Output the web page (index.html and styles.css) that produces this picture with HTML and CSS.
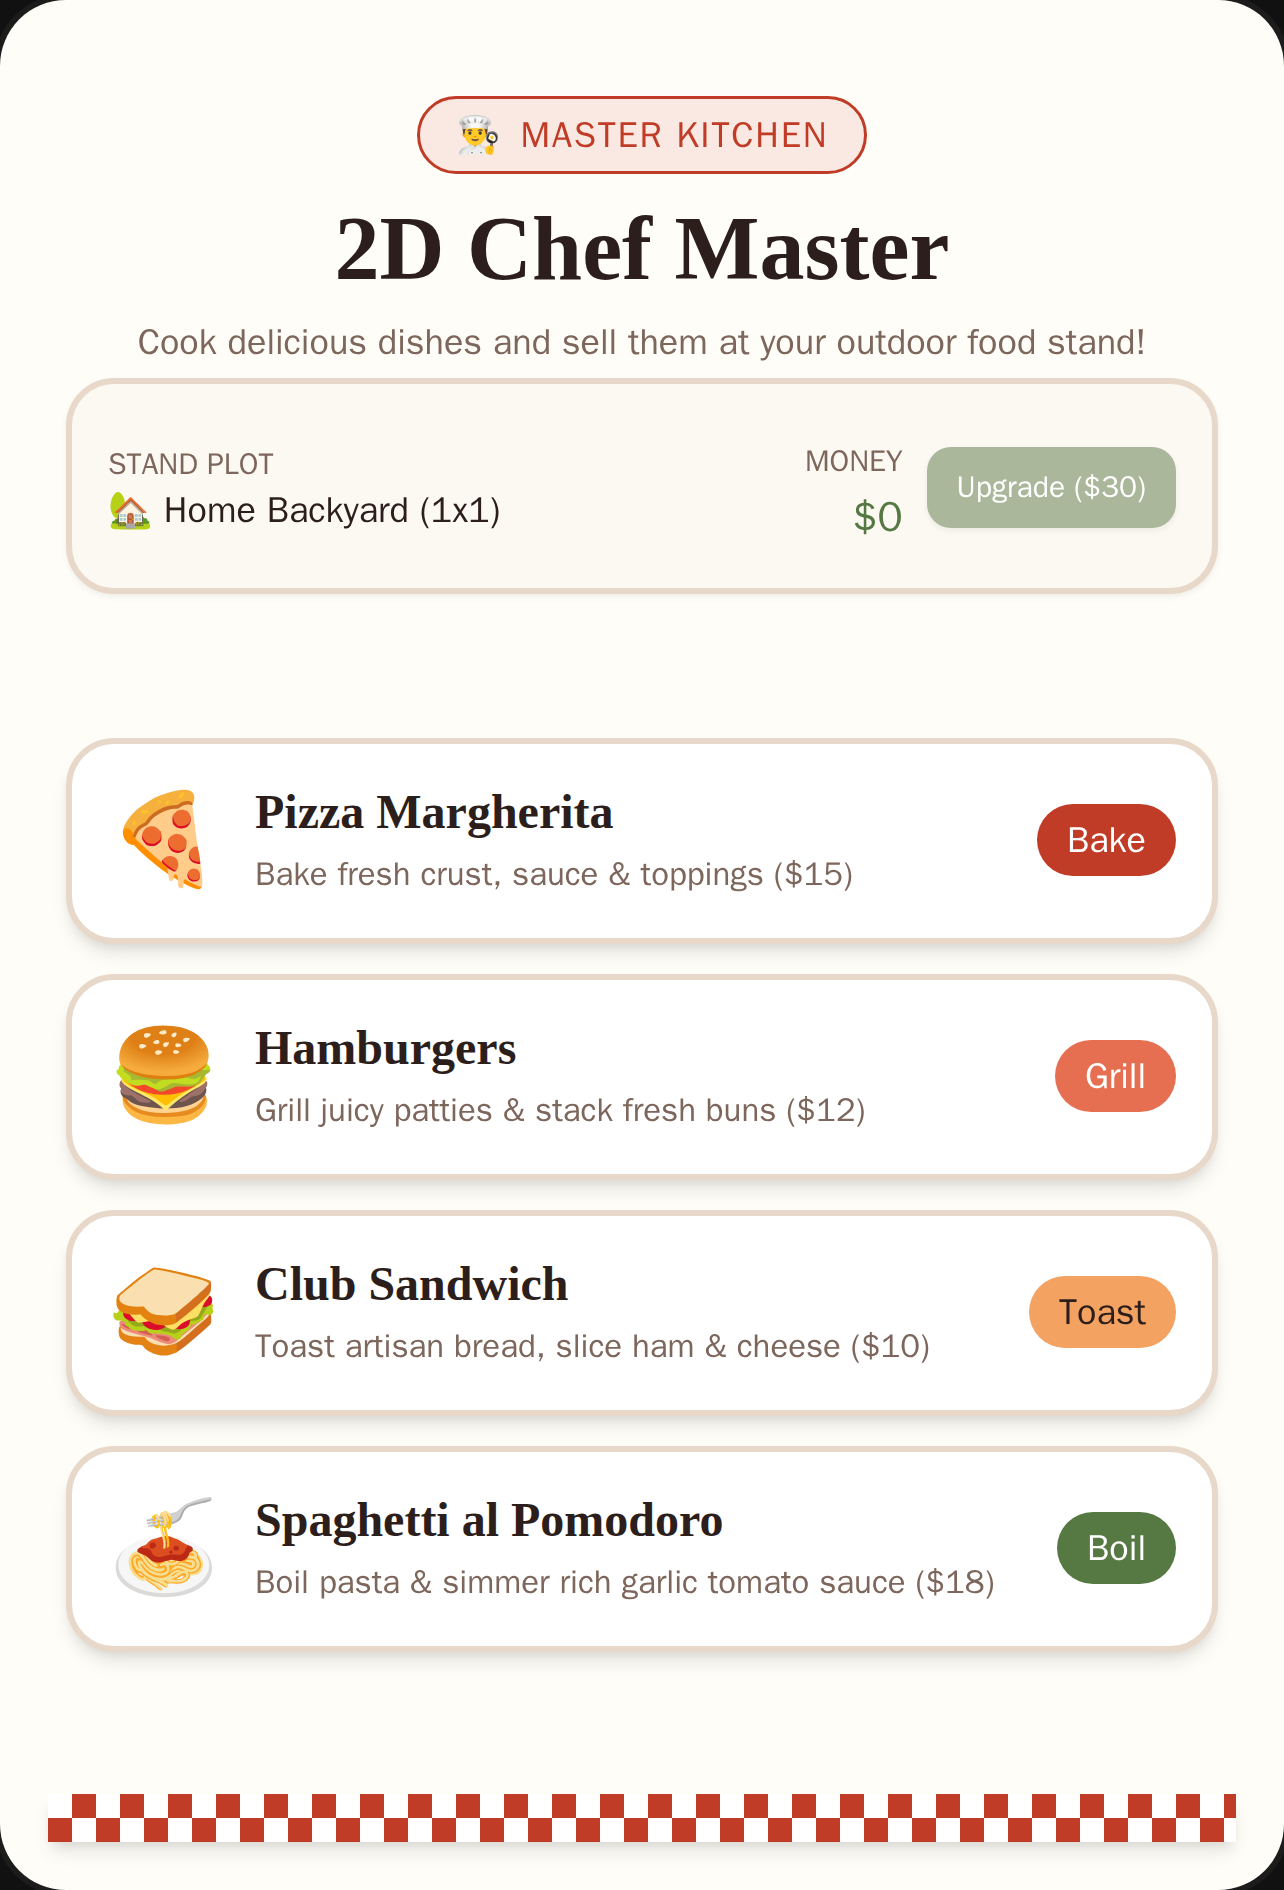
FILE: index.html
```html
<!DOCTYPE html>
<html lang="en">
<head>
<meta charset="utf-8">
<meta name="viewport" content="width=device-width, initial-scale=1">
<title>2D Chef Master</title>
<link rel="stylesheet" href="styles.css">
</head>
<body>
<div class="screen">
  <header class="intro">
    <div class="badge"><span>👨‍🍳</span><span>MASTER KITCHEN</span></div>
    <h1 class="title">2D Chef Master</h1>
    <p class="subtitle">Cook delicious dishes and sell them at your outdoor food stand!</p>
  </header>
  <main class="content">
    <section class="stand">
      <div class="plot">
        <span class="label">STAND PLOT</span>
        <span class="plot-name">🏡 Home Backyard (1x1)</span>
      </div>
      <div class="money">
        <span class="label">MONEY</span>
        <span class="amount">$0</span>
      </div>
      <button class="upgrade" type="button" disabled>Upgrade ($30)</button>
    </section>
    <section class="dishes">
      <article class="dish">
        <span class="dish-icon">🍕</span>
        <div class="dish-text">
          <h2 class="dish-name">Pizza Margherita</h2>
          <p class="dish-info">Bake fresh crust, sauce &amp; toppings ($15)</p>
        </div>
        <button class="action bake" type="button">Bake</button>
      </article>
      <article class="dish">
        <span class="dish-icon">🍔</span>
        <div class="dish-text">
          <h2 class="dish-name">Hamburgers</h2>
          <p class="dish-info">Grill juicy patties &amp; stack fresh buns ($12)</p>
        </div>
        <button class="action grill" type="button">Grill</button>
      </article>
      <article class="dish">
        <span class="dish-icon">🥪</span>
        <div class="dish-text">
          <h2 class="dish-name">Club Sandwich</h2>
          <p class="dish-info">Toast artisan bread, slice ham &amp; cheese ($10)</p>
        </div>
        <button class="action toast" type="button">Toast</button>
      </article>
      <article class="dish">
        <span class="dish-icon">🍝</span>
        <div class="dish-text">
          <h2 class="dish-name">Spaghetti al Pomodoro</h2>
          <p class="dish-info">Boil pasta &amp; simmer rich garlic tomato sauce ($18)</p>
        </div>
        <button class="action boil" type="button">Boil</button>
      </article>
    </section>
  </main>
  <div class="checker"></div>
</div>
</body>
</html>
```
FILE: styles.css
```css
:root {
  --cream: #fffdf7;
  --ink: #2c1e1b;
  --brown: #7d665b;
  --tan: #e8d8c9;
  --red: #c03c27;
  --green: #567842;
  --sans: "WenQuanYi Zen Hei", "Libre Franklin", "Liberation Sans", sans-serif;
  --serif: "Liberation Serif", serif;
}

* { box-sizing: border-box; }

html { background: #111; }

body {
  margin: 0;
  color: var(--ink);
  font-family: var(--sans);
}

h1, h2, p { margin: 0; }

button {
  border: 0;
  font-family: inherit;
  cursor: pointer;
}

.screen {
  display: flex;
  flex-direction: column;
  min-height: 100vh;
  padding: 96px 48px 48px;
  border-radius: 66px;
  background: var(--cream);
  box-shadow: 0 0 0 6px #1c1c1c;
}

.intro {
  display: flex;
  flex-direction: column;
  align-items: center;
  text-align: center;
}

.badge {
  display: flex;
  align-items: center;
  gap: 18px;
  height: 78px;
  padding: 0 36px;
  border: 3px solid var(--red);
  border-radius: 39px;
  background: #fae9e2;
  color: var(--red);
  font-size: 36px;
  letter-spacing: 0.05em;
}

.title {
  margin-top: 21px;
  font: bold 90px/108px var(--serif);
}

.subtitle {
  margin: 15px 0 12px;
  color: var(--brown);
  font-size: 36px;
  line-height: 48px;
}

.content {
  display: flex;
  flex-direction: column;
  gap: 144px;
  padding: 0 18px;
}

.stand {
  display: flex;
  align-items: center;
  gap: 24px;
  min-height: 216px;
  padding: 37px 36px 35px;
  border: 6px solid var(--tan);
  border-radius: 48px;
  background: #fcf9f3;
  box-shadow: 0 3px 6px rgba(0, 0, 0, 0.06);
}

.plot {
  display: flex;
  flex: 1;
  flex-direction: column;
  gap: 2px;
}

.label {
  color: var(--brown);
  font-size: 30px;
  line-height: 44px;
}

.plot-name {
  font-size: 36px;
  line-height: 44px;
}

.money {
  display: flex;
  flex-direction: column;
  align-items: flex-end;
  gap: 8px;
  padding-top: 8px;
}

.amount {
  color: var(--green);
  font-size: 42px;
  line-height: 52px;
}

.upgrade {
  height: 81px;
  padding: 0 30px;
  border-radius: 24px;
  background: #abb79b;
  box-shadow: 0 3px 6px rgba(0, 0, 0, 0.06);
  color: #fff;
  font-size: 30px;
}

.dishes {
  display: flex;
  flex-direction: column;
  gap: 30px;
}

.dish {
  display: flex;
  align-items: center;
  gap: 36px;
  min-height: 206px;
  padding: 35px 36px 37px;
  border: 6px solid var(--tan);
  border-radius: 48px;
  background: #fff;
  box-shadow: 0 12px 18px -3px rgba(0, 0, 0, 0.1), 0 6px 12px -6px rgba(0, 0, 0, 0.1);
}

.dish-icon {
  width: 111px;
  font-size: 90px;
  line-height: 108px;
}

.dish-text {
  display: flex;
  flex: 1;
  flex-direction: column;
  gap: 14px;
}

.dish-name {
  font: bold 48px/54px var(--serif);
}

.dish-info {
  color: var(--brown);
  font-size: 33px;
  line-height: 42px;
}

.action {
  height: 72px;
  padding: 0 30px;
  border-radius: 36px;
  color: #fff;
  font-size: 36px;
}

.bake { background: var(--red); }
.grill { background: #e76f51; }
.toast { background: #f4a261; color: var(--ink); }
.boil { background: var(--green); }

.checker {
  height: 48px;
  margin-top: 142px;
  background: conic-gradient(var(--red) 25%, #fff 0 50%, var(--red) 0 75%, #fff 0) 0 0 / 48px 48px;
  box-shadow: 0 12px 18px -3px rgba(0, 0, 0, 0.1), 0 6px 12px -6px rgba(0, 0, 0, 0.1);
}
```
